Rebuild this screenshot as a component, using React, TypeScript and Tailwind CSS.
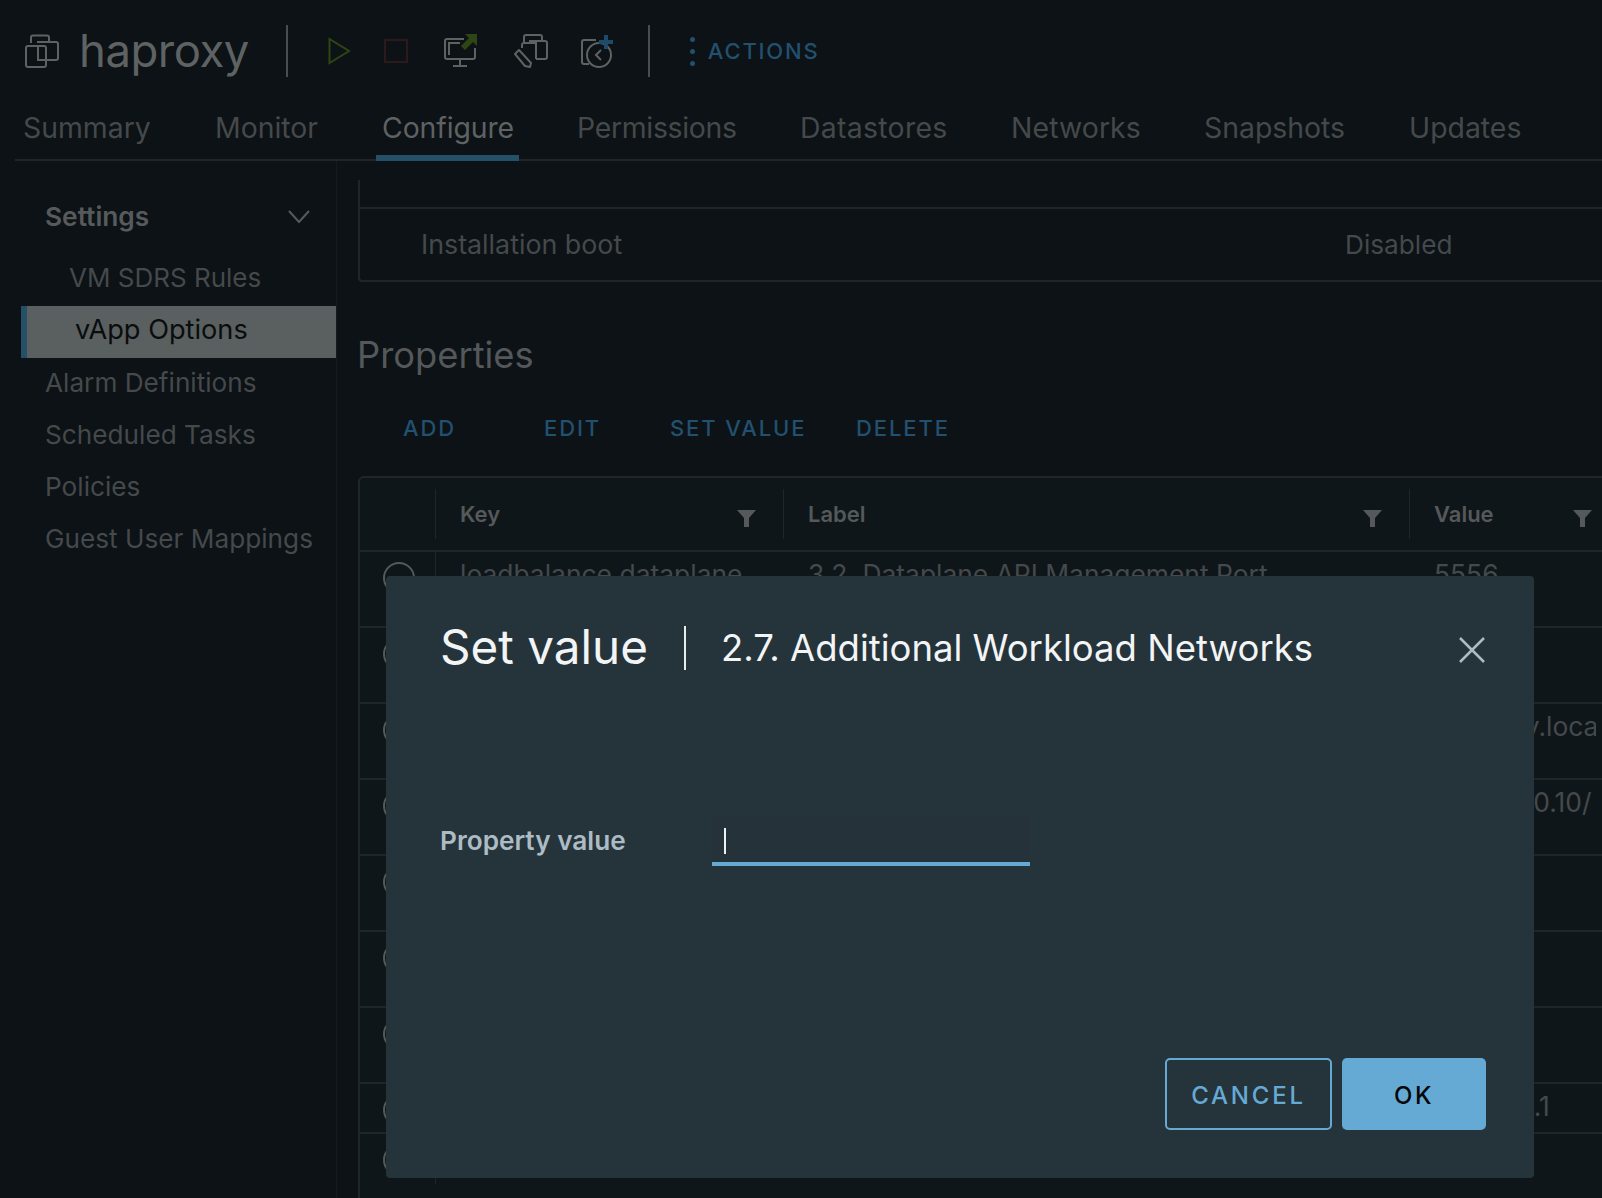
import React from "react";

const tabs = [
  { label: "Summary", cls: "w-[192px] text-[#45494b]" },
  { label: "Monitor", cls: "w-[167px] text-[#45494b]" },
  { label: "Configure", cls: "w-[195px] text-[#5f6263] tracking-[-0.1px]" },
  { label: "Permissions", cls: "w-[223px] text-[#45494b] tracking-[-0.3px]" },
  { label: "Datastores", cls: "w-[211px] text-[#45494b] tracking-[0.3px]" },
  { label: "Networks", cls: "w-[193px] text-[#45494b] tracking-[0.1px]" },
  { label: "Snapshots", cls: "w-[205px] text-[#45494b]" },
  { label: "Updates", cls: "w-[150px] text-[#45494b]" },
];

const sideItems = ["Alarm Definitions", "Scheduled Tasks", "Policies", "Guest User Mappings"];

const rows = [
  { key: "loadbalance.dataplane", label: "3.2. Dataplane API Management Port", value: "5556", h: "h-[76px]", pad: "pl-[25px]" },
  { key: "", label: "", value: "", h: "h-[76px]", pad: "pl-[25px]" },
  { key: "", label: "", value: "haproxy.local", h: "h-[76px]", pad: "pl-[30px]" },
  { key: "", label: "", value: "192.168.0.10/", h: "h-[76px]", pad: "pl-[26px]" },
  { key: "", label: "", value: "", h: "h-[76px]", pad: "pl-[25px]" },
  { key: "", label: "", value: "", h: "h-[76px]", pad: "pl-[25px]" },
  { key: "", label: "", value: "", h: "h-[76px]", pad: "pl-[25px]" },
  { key: "", label: "", value: "10.10.10.1", h: "h-[50px]", pad: "pl-[34px]" },
  { key: "", label: "", value: "", h: "h-[76px]", pad: "pl-[25px]" },
];

function VmIcon() {
  return (
    <svg width="34" height="34" viewBox="0 0 34 34" fill="none" stroke="#5f6263" strokeWidth="2">
      <path d="M6 9V3.5A2 2 0 0 1 8 1.5h14a2 2 0 0 1 2 2V7" />
      <path d="M12 8h19a2 2 0 0 1 2 2v14a2 2 0 0 1-2 2H21" />
      <rect x="1" y="12" width="20" height="21" rx="2" />
      <path d="M13 12v14h8" />
    </svg>
  );
}

function Filter() {
  return (
    <svg className="mt-[9px]" width="19" height="17" viewBox="0 0 19 17" fill="#55595b">
      <path d="M0 0h19l-7 8v9h-5V8z" />
    </svg>
  );
}

function HeaderIcons() {
  return (
    <div className="flex items-center">
      <svg className="ml-[40px]" width="23" height="28" viewBox="0 0 23 28" fill="none" stroke="#2f4513" strokeWidth="2">
        <path d="M1.5 2v24L21 14z" />
      </svg>
      <svg className="ml-[33px]" width="24" height="24" viewBox="0 0 24 24" fill="none" stroke="#2c1a1a" strokeWidth="2">
        <rect x="1" y="1" width="22" height="22" />
      </svg>
      <svg className="ml-[36px]" width="34" height="34" viewBox="0 0 34 34" fill="none" stroke="#5f6263" strokeWidth="2">
        <path d="M20 5H3a2 2 0 0 0-2 2v16a2 2 0 0 0 2 2h26a2 2 0 0 0 2-2V14" />
        <path d="M5 21V9h11" />
        <path d="M16 25v6M9 32h14" />
        <path d="M21 0h12v12l-4-4-8 8-4-4 8-8z" fill="#2f4513" stroke="none" />
      </svg>
      <svg className="ml-[36px]" width="34" height="36" viewBox="0 0 34 36" fill="none" stroke="#5f6263" strokeWidth="2">
        <path d="M10 9V4a2 2 0 0 1 2-2h14a2 2 0 0 1 2 2v4" />
        <path d="M15 8h16a2 2 0 0 1 2 2v14a2 2 0 0 1-2 2h-9" />
        <path d="M8 15v-3a2 2 0 0 1 2-2h12v16" />
        <path d="M1 21l4-4 12 13-1 4-5-1z" strokeLinejoin="round" />
      </svg>
      <svg className="ml-[33px]" width="33" height="33" viewBox="0 0 33 33" fill="none" stroke="#5f6263" strokeWidth="2">
        <path d="M15 5H3a2 2 0 0 0-2 2v20a2 2 0 0 0 2 2h5" />
        <circle cx="18" cy="20" r="12" />
        <path d="M20 15l-5 5 5 5" />
        <path d="M23 0h4v5h5v4h-5v5h-4V9h-5V5h5z" fill="#1f4a6a" stroke="none" />
      </svg>
    </div>
  );
}

export default function App() {
  return (
    <div className="relative w-[1602px] h-[1198px] overflow-hidden bg-[#0c1215] font-['Inter',sans-serif]">
      {/* header */}
      <div className="flex items-center h-[102px] pl-[25px]">
        <VmIcon />
        <span className="ml-[20px] text-[45.5px] text-[#5f6263] leading-none tracking-[-0.5px]">haproxy</span>
        <div className="ml-[37px] w-[2px] h-[52px] bg-[#4a4d4e]" />
        <HeaderIcons />
        <div className="ml-[34px] w-[2px] h-[52px] bg-[#4a4d4e]" />
        <div className="ml-[40px] flex flex-col gap-[7px]">
          <div className="w-[5px] h-[5px] rounded-full bg-[#22506f]" />
          <div className="w-[5px] h-[5px] rounded-full bg-[#22506f]" />
          <div className="w-[5px] h-[5px] rounded-full bg-[#22506f]" />
        </div>
        <span className="ml-[13px] text-[22px] font-medium tracking-[1.8px] text-[#22506f]">ACTIONS</span>
      </div>

      {/* tabs */}
      <div className="flex h-[59px] ml-[15px] border-b-2 border-[#1f2629]">
        {tabs.map((t) => (
          <div key={t.label} className={`pl-[8px] shrink-0 ${t.cls}`}>
            <span className="text-[28.4px] leading-[52px]">{t.label}</span>
          </div>
        ))}
      </div>
      <div className="absolute left-[376px] top-[155px] w-[143px] h-[6px] bg-[#265068]" />

      {/* body */}
      <div className="flex">
        <div className="w-[337px] shrink-0 pt-[29px] border-r border-[#141a1d] h-[1037px]">
          <div className="flex items-center justify-between h-[52px] pl-[45px] pr-[26px] pt-[1px]">
            <span className="text-[26.3px] font-semibold text-[#575a5c]">Settings</span>
            <svg width="22" height="14" viewBox="0 0 22 14" fill="none" stroke="#575a5c" strokeWidth="2">
              <path d="M1 1l10 11L21 1" />
            </svg>
          </div>
          <div className="flex items-center h-[64px] pl-[69px] pt-[7px] text-[26px] text-[#45494c]">VM SDRS Rules</div>
          <div className="flex items-center h-[52px] ml-[21px] border-l-[6px] border-[#265068] bg-[#5a5f60] pl-[48px] pb-[3px] text-[27.2px] text-[#0a0d0e]">
            vApp Options
          </div>
          {sideItems.map((s) => (
            <div key={s} className="flex items-center h-[52px] pl-[45px] pb-[3px] text-[26.2px] text-[#45494c]">
              {s}
            </div>
          ))}
        </div>

        <div className="flex-1 min-w-0 pt-[19px] pl-[21px]">
          <div className="h-[102px] border-l-2 border-b-2 border-[#1f2629] rounded-bl-[4px]">
            <div className="h-[29px] border-b-2 border-[#1f2629]" />
            <div className="flex items-center h-[71px] pl-[61px] text-[26.8px] text-[#45494c]">
              <span className="w-[924px]">Installation boot</span>
              <span className="text-[26.2px]">Disabled</span>
            </div>
          </div>

          <h2 className="-ml-[1px] mt-[49px] text-[36.3px] leading-[48px] font-normal text-[#55585a]">Properties</h2>

          <div className="flex items-center h-[32px] mt-[33px] text-[22px] font-medium tracking-[1.9px] text-[#22506f]">
            <span className="ml-[45px] w-[141px]">ADD</span>
            <span className="w-[126px]">EDIT</span>
            <span className="w-[186px]">SET VALUE</span>
            <span>DELETE</span>
          </div>

          {/* table */}
          <div className="mt-[32px] bg-[#0f1619] border-l-2 border-t-2 border-[#1f2629] rounded-tl-[6px]">
            <div className="flex items-center h-[74px] border-b-2 border-[#1f2629] text-[22px] font-semibold text-[#55595b]">
              <div className="w-[75px] shrink-0" />
              <div className="flex items-center justify-between w-[348px] shrink-0 h-[50px] border-l border-[#1f2629] pl-[24px] pr-[27px]">
                <span>Key</span>
                <Filter />
              </div>
              <div className="flex items-center justify-between w-[626px] shrink-0 h-[50px] border-l border-[#1f2629] pl-[24px] pr-[27px]">
                <span>Label</span>
                <Filter />
              </div>
              <div className="flex items-center justify-between w-[183px] shrink-0 h-[50px] border-l border-[#1f2629] pl-[24px] pr-[0px]">
                <span>Value</span>
                <Filter />
              </div>
            </div>
            {rows.map((r, i) => (
              <div key={i} className={`flex border-b-2 border-[#1f2629] ${r.h} text-[26.4px] text-[#45494c]`}>
                <div className="w-[75px] shrink-0 pl-[23px] pt-[10px]">
                  <div className="w-[32px] h-[32px] rounded-full border-2 border-[#55595b]" />
                </div>
                <div className="w-[348px] shrink-0 h-[50px] border-l border-[#1f2629] pl-[24px] pt-[3px] whitespace-nowrap">{r.key}</div>
                <div className="w-[626px] shrink-0 pl-[25px] pt-[3px] whitespace-nowrap">{r.label}</div>
                <div className={`w-[187px] shrink-0 ${r.pad} pt-[3px] overflow-hidden whitespace-nowrap`}>{r.value}</div>
              </div>
            ))}
            <div className="ml-[75px] w-[1px] h-[40px] bg-[#1f2629]" />
          </div>
        </div>
      </div>

      {/* modal */}
      <div className="absolute left-[386px] top-[576px] w-[1148px] h-[602px] rounded-[4px] bg-[#25333b] pl-[54px] pr-[48px] pt-[50px] pb-[48px] flex flex-col">
        <div className="flex items-center h-[44px]">
          <span className="text-[47.6px] leading-none -mt-[2px] text-[#f2f4f5]">Set value</span>
          <div className="ml-[36px] w-[2px] h-[44px] bg-[#e8ecee]" />
          <span className="ml-[35px] text-[36.5px] leading-none text-[#f2f4f5]">2.7. Additional Workload Networks</span>
          <svg className="ml-auto mr-[1px] mt-[3px]" width="26" height="26" viewBox="0 0 26 26" fill="none" stroke="#adbbc4" strokeWidth="2.5">
            <path d="M1 1l24 24M25 1L1 25" />
          </svg>
        </div>

        <div className="flex mt-[152px]">
          <span className="w-[272px] text-[26.2px] leading-[38px] font-semibold text-[#adbbc4]">Property value</span>
          <div className="w-[318px] h-[50px] -mt-[6px] border-b-4 border-[#65aad4] bg-[#25323a] pl-[12px] pt-[12px]">
            <div className="w-[2px] h-[26px] bg-[#eef1f2]" />
          </div>
        </div>

        <div className="flex justify-end gap-[10px] mt-auto">
          <button className="w-[167px] h-[72px] pt-[3px] rounded-[5px] border-2 border-[#65aad4] text-[24px] font-medium tracking-[2.8px] text-[#65aad4]">
            CANCEL
          </button>
          <button className="w-[144px] h-[72px] pt-[3px] rounded-[5px] bg-[#65aad4] text-[24px] font-medium tracking-[2.5px] text-[#050708]">
            OK
          </button>
        </div>
      </div>
    </div>
  );
}
